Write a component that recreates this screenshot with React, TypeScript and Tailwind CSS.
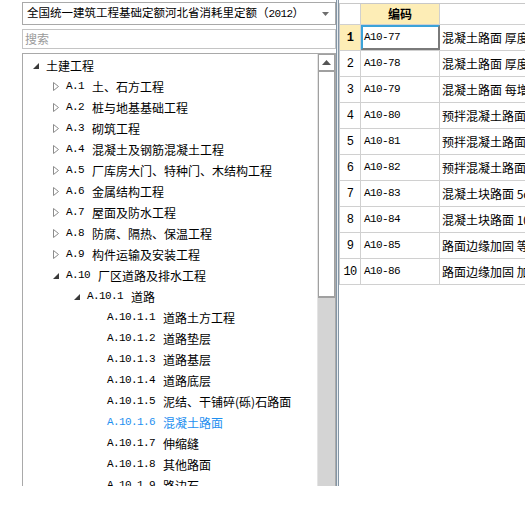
import React from "react";

type TreeRow = {
  level: number;
  code?: string;
  name: string;
  state?: "open" | "closed";
  active?: boolean;
};

const treeRows: TreeRow[] = [
  { level: 0, name: "土建工程", state: "open" },
  { level: 1, code: "A.1", name: "土、石方工程", state: "closed" },
  { level: 1, code: "A.2", name: "桩与地基基础工程", state: "closed" },
  { level: 1, code: "A.3", name: "砌筑工程", state: "closed" },
  { level: 1, code: "A.4", name: "混凝土及钢筋混凝土工程", state: "closed" },
  { level: 1, code: "A.5", name: "厂库房大门、特种门、木结构工程", state: "closed" },
  { level: 1, code: "A.6", name: "金属结构工程", state: "closed" },
  { level: 1, code: "A.7", name: "屋面及防水工程", state: "closed" },
  { level: 1, code: "A.8", name: "防腐、隔热、保温工程", state: "closed" },
  { level: 1, code: "A.9", name: "构件运输及安装工程", state: "closed" },
  { level: 1, code: "A.10", name: "厂区道路及排水工程", state: "open" },
  { level: 2, code: "A.10.1", name: "道路", state: "open" },
  { level: 3, code: "A.10.1.1", name: "道路土方工程" },
  { level: 3, code: "A.10.1.2", name: "道路垫层" },
  { level: 3, code: "A.10.1.3", name: "道路基层" },
  { level: 3, code: "A.10.1.4", name: "道路底层" },
  { level: 3, code: "A.10.1.5", name: "泥结、干铺碎(砾)石路面" },
  { level: 3, code: "A.10.1.6", name: "混凝土路面", active: true },
  { level: 3, code: "A.10.1.7", name: "伸缩缝" },
  { level: 3, code: "A.10.1.8", name: "其他路面" },
  { level: 3, code: "A.10.1.9", name: "路边石" },
];

const levelPad = ["pl-[10px]", "pl-[30px]", "pl-[51px]", "pl-[71px]"];

const gridRows = [
  { code: "A10-77", desc: "混凝土路面 厚度15cm" },
  { code: "A10-78", desc: "混凝土路面 厚度20cm" },
  { code: "A10-79", desc: "混凝土路面 每增减1cm" },
  { code: "A10-80", desc: "预拌混凝土路面 厚度15cm" },
  { code: "A10-81", desc: "预拌混凝土路面 厚度20cm" },
  { code: "A10-82", desc: "预拌混凝土路面 每增减1cm" },
  { code: "A10-83", desc: "混凝土块路面 5cm" },
  { code: "A10-84", desc: "混凝土块路面 10cm" },
  { code: "A10-85", desc: "路面边缘加固 等厚" },
  { code: "A10-86", desc: "路面边缘加固 加厚" },
];

const Arrow = ({ state }: { state?: "open" | "closed" }) => {
  if (state === "closed")
    return (
      <svg width="6" height="9" viewBox="0 0 6 9">
        <polygon points="0.5,0.5 5.5,4.5 0.5,8.5" fill="#fff" stroke="#8c8c8c" strokeWidth="1" />
      </svg>
    );
  if (state === "open")
    return (
      <svg width="6" height="6" viewBox="0 0 6 6">
        <polygon points="6,0 6,6 0,6" fill="#3a3a3a" />
      </svg>
    );
  return null;
};

export default function App() {
  return (
    <div className="w-[525px] h-[506px] bg-white overflow-hidden text-black font-['Noto_Sans_CJK_SC',sans-serif]">
      <div className="flex h-[486px]">
        {/* Left: library + tree */}
        <div className="w-[336px] shrink-0 pl-[22px] pt-[2px] flex flex-col gap-[4px]">
          {/* Combo */}
          <div className="h-[23px] border border-[#a9a9a9] flex items-center pl-[4px] pr-[6px]">
            <span className="flex-1 text-[11.5px] whitespace-nowrap overflow-hidden">
              全国统一建筑工程基础定额河北省消耗里定额（<span className="font-['Liberation_Mono',monospace] text-[11px] tracking-[-0.6px]">2012</span>）
            </span>
            <svg width="7" height="4" viewBox="0 0 7 4">
              <polygon points="0,0 7,0 3.5,4" fill="#6e6e6e" />
            </svg>
          </div>

          {/* Search */}
          <div className="h-[20px] border border-[#c4c4c4] flex items-center pl-[2px]">
            <span className="text-[12px] text-[#9a9a9a]">搜索</span>
          </div>

          {/* Tree */}
          <div className="flex-1 border border-b-0 border-[#a9a9a9] flex overflow-hidden min-h-0">
            <div className="flex-1 pt-[1px] overflow-hidden">
              {treeRows.map((row, i) => (
                <div key={i} className={`h-[21px] flex items-center whitespace-nowrap ${levelPad[row.level]}`}>
                  <span className="w-[13px] shrink-0 flex items-center">
                    <Arrow state={row.state} />
                  </span>
                  <span className={`flex items-center text-[12px] ${row.active ? "text-[#1e8ff0]" : ""}`}>
                    {row.code && (
                      <span className="font-['Liberation_Mono',monospace] text-[11px] tracking-[-0.6px] mr-[8px]">
                        {row.code}
                      </span>
                    )}
                    {row.name}
                  </span>
                </div>
              ))}
            </div>

            {/* Scrollbar */}
            <div className="w-[18px] shrink-0 flex flex-col bg-[#d4d4d4] border-l border-[#e4e4e4]">
              <div className="h-[17px] bg-white border border-[#a0a0a0] flex items-center justify-center">
                <svg width="9" height="5" viewBox="0 0 9 5">
                  <polygon points="4.5,0 9,5 0,5" fill="#555" />
                </svg>
              </div>
              <div className="h-[227px] bg-white border border-[#a0a0a0] border-b-2" />
            </div>
          </div>
        </div>

        {/* Splitter */}
        <div className="w-[3px] shrink-0 border-l border-r border-[#8496a6] bg-[#e8ecf0]" />

        {/* Right: grid */}
        <div className="flex-1 pt-[3px] overflow-hidden">
          <div className="border-t border-l border-[#c8c8c8] w-[300px]">
            {/* Header */}
            <div className="flex h-[21px] border-b border-[#d0d0d0]">
              <div className="w-[21px] shrink-0 border-r border-[#d0d0d0]" />
              <div className="w-[79px] shrink-0 bg-[#fdedb6] border-r border-[#d0d0d0] flex items-center justify-center text-[12px] font-bold">
                编码
              </div>
              <div className="flex-1" />
            </div>

            {gridRows.map((r, i) => (
              <div key={r.code} className="flex h-[26px] border-b border-[#d0d0d0]">
                <div
                  className={`w-[21px] shrink-0 border-r border-[#d0d0d0] flex items-center justify-center font-['Liberation_Mono',monospace] text-[12px] tracking-[-0.8px] ${
                    i === 0 ? "bg-[#fdedb6] font-bold" : ""
                  }`}
                >
                  {i + 1}
                </div>
                <div
                  className={`w-[79px] shrink-0 flex items-center font-['Liberation_Mono',monospace] text-[11px] tracking-[-0.6px] ${
                    i === 0
                      ? "border-2 border-l-[#3ba3d9] border-t-[#3ba3d9] border-r-[#7a7a7a] border-b-[#7a7a7a] pl-[1px]"
                      : "border-r border-[#d0d0d0] pl-[3px]"
                  }`}
                >
                  {r.code}
                </div>
                <div className="flex-1 flex items-center pl-[2px] text-[12px] whitespace-nowrap overflow-hidden">
                  {r.desc}
                </div>
              </div>
            ))}
          </div>
        </div>
      </div>
    </div>
  );
}
